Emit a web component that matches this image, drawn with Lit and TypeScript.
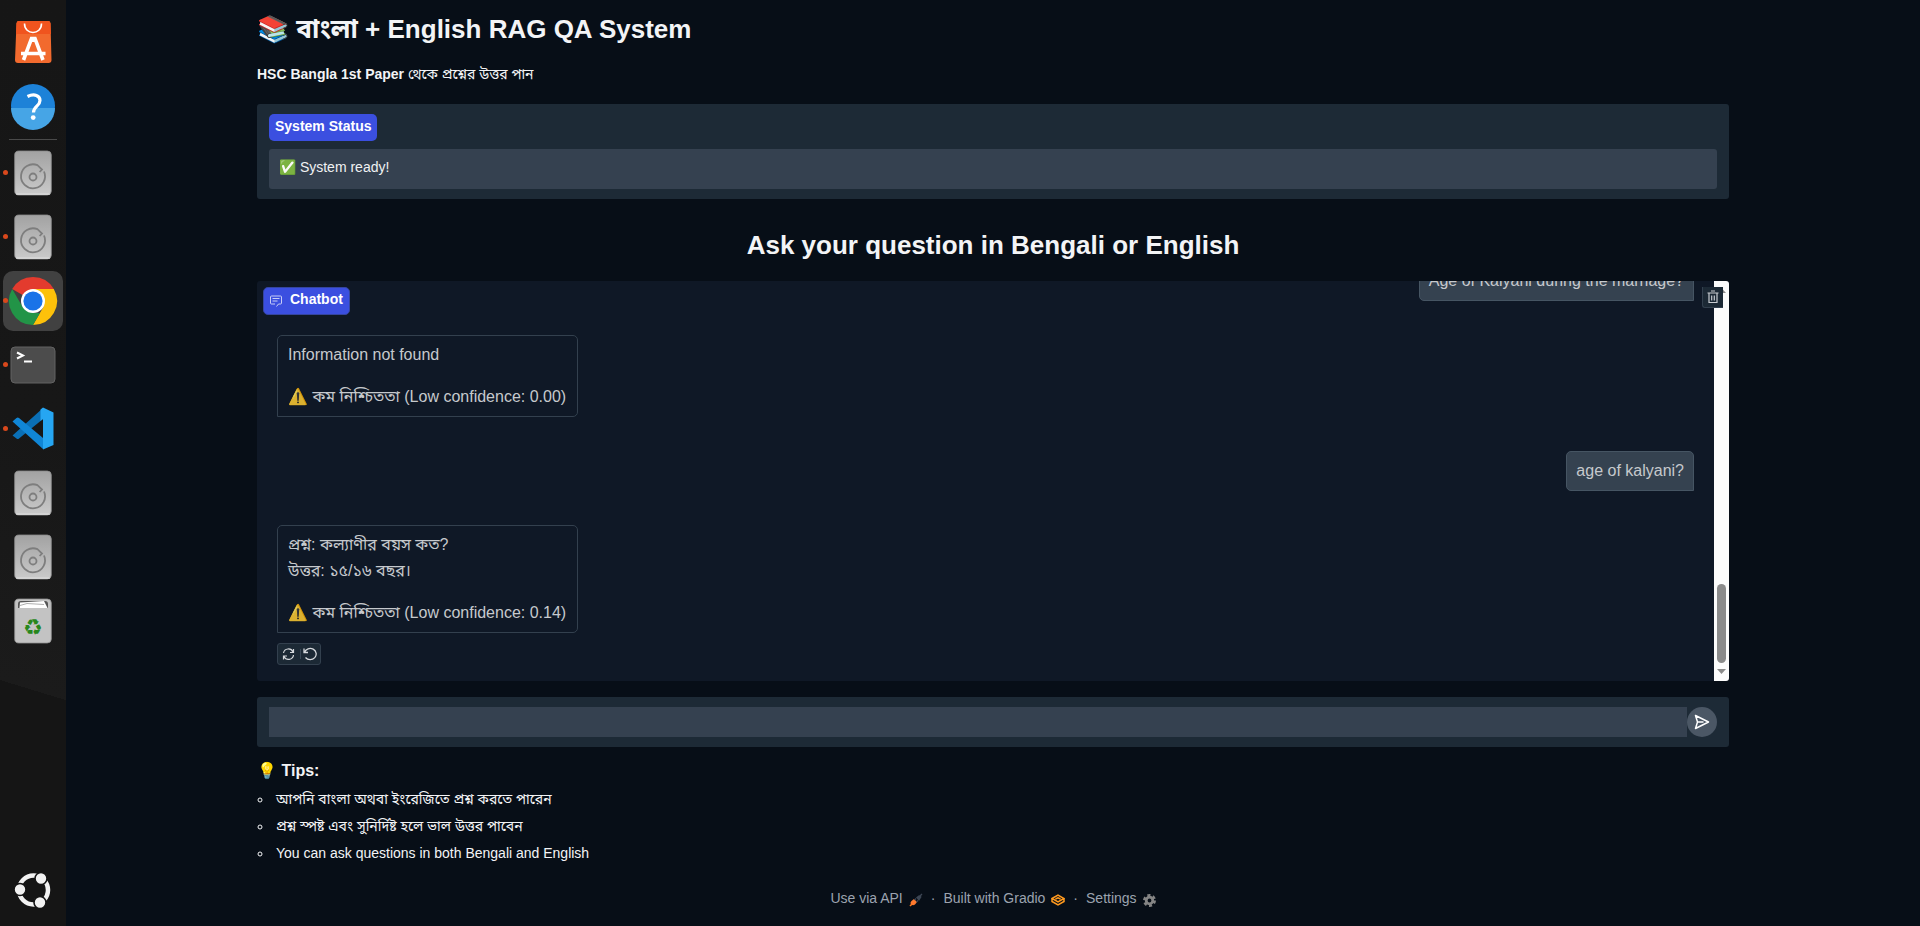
import { LitElement, html, css, svg } from "lit";
import { customElement } from "lit/decorators.js";

const driveIcon = svg`
  <rect x="11.700" y="8" width="36.600" height="44" rx="4" fill="url(#drive)" stroke="#8b8b8b" stroke-width=".8"/>
  <rect x="13" y="50.500" width="34" height="1.200" rx=".6" fill="#dedede"/>
  <path d="M41 28.500A12 12 0 1 1 34.500 22.200L39 26.500 36.600 29" fill="none" stroke="#7e7e7e" stroke-width="1.800"/>
  <circle cx="30" cy="34" r="3.500" fill="none" stroke="#7e7e7e" stroke-width="1.800"/>
  <defs><linearGradient id="drive" x1="0" y1="0" x2="0" y2="1"><stop stop-color="#a2a2a2"/><stop offset="1" stop-color="#cacaca"/></linearGradient></defs>`;

const storeIcon = svg`
  <path d="M15 9h30a2.500 2.500 0 0 1 2.500 2.300L48.500 48a3 3 0 0 1-3 3H15a3 3 0 0 1-3-3L13.500 11.300A2.500 2.500 0 0 1 16 9z" fill="#f26a2e"/>
  <path d="M16 9h29a2.500 2.500 0 0 1 2.500 2.300L48 22H13L13.500 11.300A2.500 2.500 0 0 1 16 9z" fill="#f0541e"/>
  <path d="M21.500 11.500c0 12 17 12 17 0" fill="none" stroke="#fff" stroke-width="1.600"/>
  <path d="M20.500 48 28.500 26.500h3.500L40 48M18 41.500h24.500" fill="none" stroke="#fff" stroke-width="3.600"/>
  <path d="M28 25h5v5h-5z" fill="#fff"/>`;

const helpIcon = svg`
  <circle cx="30" cy="30" r="22" fill="#1d82d8"/>
  <path d="M8 32a22 22 0 0 0 44 0z" fill="#46a5e6"/>
  <path d="M24.500 20.500c7-3.500 12.500-.8 12.500 4 0 5.500-6.500 6-6.500 12" fill="none" stroke="#fff" stroke-width="3.200"/>
  <circle cx="30.200" cy="41.600" r="2.400" fill="#fff"/>`;

const chromeIcon = svg`
  <path d="M30 30 9.200 18A24 24 0 0 1 50.800 18z" fill="#e33b2e"/>
  <path d="M30 18H50.800A24 24 0 0 1 30 54L40.400 36z" fill="#fdc10a"/>
  <path d="M9.200 18 19.600 36 30 42h7L30 54A24 24 0 0 1 9.200 18z" fill="#229447"/>
  <circle cx="30" cy="30" r="12" fill="#fff"/>
  <circle cx="30" cy="30" r="9.600" fill="#1a73e8"/>`;

const terminalIcon = svg`
  <rect x="8" y="12" width="44" height="36" rx="4" fill="#4c4c4c" stroke="#626262" stroke-width="1"/>
  <path d="M14 17.500 20 20.500 14 23.500" fill="none" stroke="#fff" stroke-width="2"/>
  <path d="M21 26.500h8" stroke="#fff" stroke-width="2"/>`;

const codeIcon = svg`
  <path d="M9.500 36.500 40 9v11L16 39.500a2 2 0 0 1-2.500 0L9.500 36.500z" fill="#0a6fb5"/>
  <path d="M9.500 22.500 13.500 19a2 2 0 0 1 2.500 0L40 39v11z" fill="#1086d6"/>
  <path d="M40 8.500 50.500 13.500v32.500L40 50.500V40L40 20z" fill="#26a6f2"/>
  <path d="M37.500 10.500 40 8.500v11.500L37.500 22z" fill="#26a6f2"/>`;

const trashCanIcon = svg`
  <rect x="11.700" y="8" width="36.600" height="44" rx="4" fill="#c3c3c3" stroke="#8f8f8f" stroke-width=".8"/>
  <path d="M15 17v-4q0-3 3-3h24q3 0 3 3v4z" fill="#555"/>
  <path d="M16.500 17 17 11.500 41 10l3.500 7z" fill="#fff"/>
  <path d="M17 14.500 24 12.500 41 13.500" fill="none" stroke="#999" stroke-width=".8"/>
  <text x="30" y="44" text-anchor="middle" font-family="DejaVu Sans" font-size="22" fill="#27871c">&#x267B;&#xFE0E;</text>`;

const ubuntuIcon = svg`
  <circle cx="30.500" cy="30" r="14.500" fill="none" stroke="#f2f2f2" stroke-width="4.500"/>
  <g fill="#f2f2f2" stroke="#151515" stroke-width="1.600">
    <circle cx="17" cy="29.500" r="6"/><circle cx="38" cy="18.500" r="6"/><circle cx="37" cy="42.500" r="6"/>
  </g>`;

const dockApps = [
  { name: "App Center", icon: storeIcon },
  { name: "Help", icon: helpIcon, last: true },
  { name: "Drive", icon: driveIcon, running: true },
  { name: "Drive", icon: driveIcon, running: true },
  { name: "Chrome", icon: chromeIcon, running: true, active: true },
  { name: "Terminal", icon: terminalIcon, running: true },
  { name: "Code", icon: codeIcon, running: true },
  { name: "Drive", icon: driveIcon },
  { name: "Drive", icon: driveIcon },
  { name: "Trash", icon: trashCanIcon },
];

@customElement("app-dock")
export class AppDock extends LitElement {
  static styles = css`
    :host { display: flex; flex-direction: column; gap: 4px; width: 66px; box-sizing: border-box; padding: 12px 3px 6px;
      background: linear-gradient(197deg, #161616, #171717 45%, #1b1b1b 74%, #151515 74%); }
    .app { position: relative; width: 60px; height: 60px; padding: 0; border: 0; border-radius: 10px; background: none; }
    .active { background: #414141; }
    .app svg { display: block; width: 60px; height: 60px; }
    .running::before { content: ""; position: absolute; left: 0; top: 27px; width: 5px; height: 5px; border-radius: 50%; background: #d9481c; }
    .line { width: 48px; height: 1px; margin: -1px auto; background: #4a4a4a; flex: none; }
    .last { margin-top: auto; }
  `;
  render() {
    return html`
      ${dockApps.map((a) => html`
        <button class="app ${a.running ? "running" : ""} ${a.active ? "active" : ""}" aria-label=${a.name}>
          <svg viewBox="0 0 60 60">${a.icon}</svg>
        </button>
        ${a.last ? html`<div class="line"></div>` : ""}`)}
      <button class="app last" aria-label="Show applications"><svg viewBox="0 0 60 60">${ubuntuIcon}</svg></button>`;
  }
}

@customElement("chat-panel")
export class ChatPanel extends LitElement {
  static styles = css`
    :host { display: flex; position: relative; height: 400px; border-radius: 3px; overflow: hidden; background: #0f1826; }
    .log { flex: 1; display: flex; flex-direction: column; justify-content: flex-end; gap: 34px; padding: 0 20px 16px; overflow: hidden; }
    .msg { box-sizing: border-box; padding: 6px 11px 6px 10px; border: 1px solid #33404e; border-radius: 5px; font-size: 16px; line-height: 26px; color: #c6c9cd; flex: none; }
    .msg p { margin: 0 0 16px; }
    .msg p:last-child { margin: 0; }
    .bot { align-self: flex-start; border-bottom-left-radius: 0; }
    .user { align-self: flex-end; padding: 6px 9px; background: #354250; border-color: #465563; border-bottom-right-radius: 0; }
    .emoji { opacity: .85; }
    .reply { display: flex; flex-direction: column; align-items: flex-start; gap: 10px; flex: none; }
    .tools { display: flex; align-items: center; box-sizing: border-box; height: 22px; padding: 0 3px; border: 1px solid #33404e; border-radius: 3px; background: #1c2935; }
    .tool { display: flex; padding: 0 2px 0 1px; border: 0; background: none; color: #d5d8dc; }
    .rule { width: 1px; height: 10px; margin: 0 2px 0 3px; background: #3a4856; }
    .tool + .rule + .tool { padding: 0; }
    .tag { position: absolute; left: 6px; top: 6px; display: flex; align-items: center; gap: 8px; box-sizing: border-box; height: 28px; padding: 0 6px 5px; border: 1px solid #35459f; border-radius: 5px; background: #3b4fe0; color: #fff; font-size: 14px; font-weight: 700; }
    .tag svg { margin-top: 4px; opacity: .8; }
    .clear { position: absolute; right: 6px; top: 6px; width: 21px; height: 21px; display: grid; place-items: center; padding: 0; border: 1px solid #33404e; border-top: 0; border-right: 0; border-bottom-left-radius: 3px; background: #1c2935; color: #c9cdd2; }
    .bar { width: 15px; display: flex; flex-direction: column; align-items: center; justify-content: space-between; background: #fcfcfc; padding: 7px 0; box-sizing: border-box; }
    .arrow { width: 9px; height: 5px; background: #8b8b8b; clip-path: polygon(0 0, 100% 0, 50% 100%); }
    .up { clip-path: polygon(0 100%, 100% 100%, 50% 0); }
    .thumb { width: 9px; height: 79px; margin: auto 0 6px; border-radius: 5px; background: #8b8b8b; }
  `;
  render() {
    return html`
      <div class="log">
        <div class="msg user">Age of Kalyani during the marriage?</div>
        <div class="msg bot"><p>Information not found</p><p><span class="emoji">⚠️</span> কম নিশ্চিততা (Low confidence: 0.00)</p></div>
        <div class="msg user">age of kalyani?</div>
        <div class="reply">
          <div class="msg bot"><p>প্রশ্ন: কল্যাণীর বয়স কত?<br />উত্তর: ১৫/১৬ বছর।</p><p><span class="emoji">⚠️</span> কম নিশ্চিততা (Low confidence: 0.14)</p></div>
          <div class="tools">
            <button class="tool" aria-label="Retry"><svg width="13" height="14" viewBox="0 0 13 14" fill="none" stroke="currentColor" stroke-width="1.200"><path d="M1.500 6A5 5 0 0 1 11 5M11.500 2v3.500H8M11.500 8A5 5 0 0 1 2 9.500M1.500 12.500V9H5"/></svg></button>
            <span class="rule"></span>
            <button class="tool" aria-label="Undo"><svg width="14" height="14" viewBox="0 0 14 14" fill="none" stroke="currentColor" stroke-width="1.300"><path d="M1 1.500v4h4M1.500 5.200A6 5.600 0 1 1 2.500 10.500"/></svg></button>
          </div>
        </div>
      </div>
      <div class="bar"><div class="arrow up"></div><div class="thumb"></div><div class="arrow"></div></div>
      <div class="tag"><svg width="12" height="12" viewBox="0 0 12 12" fill="none" stroke="currentColor" stroke-width=".9"><path d="M5 9H1.500A1 1 0 0 1 .5 8V2a1 1 0 0 1 1-1h9a1 1 0 0 1 1 1v6a1 1 0 0 1-1 1H8.500L6.500 11.500M2.500 3.500h7M2.500 6h5"/></svg>Chatbot</div>
      <button class="clear" aria-label="Clear"><svg width="12" height="14" viewBox="0 0 12 14" fill="none" stroke="currentColor" stroke-width="1.200"><path d="M.5 3h11M4 1h4M2 3v9.500h8V3M4.700 5.500v5M7.300 5.500v5"/></svg></button>`;
  }
}

@customElement("app-root")
export class AppRoot extends LitElement {
  static styles = css`
    :host { display: flex; min-height: 100vh; background: #070e17; color: #f3f4f6; font-family: "Liberation Sans", Arial, "Noto Sans Bengali", sans-serif; font-size: 14px; }
    .page { flex: 1; box-sizing: border-box; max-width: 1536px; margin: 0 auto; padding: 12px 32px 18px; display: flex; flex-direction: column; }
    h1 { margin: 0; font-size: 26px; line-height: 34px; }
    h2 { margin: 28px 0 18px; font-size: 26px; line-height: 36px; text-align: center; }
    h3 { margin: 15px 0 6px; font-size: 16px; line-height: 18px; }
    .lead { margin: 18px 0 19px; line-height: 21px; }
    .block { background: #1d2a36; border-radius: 3px; padding: 10px 12px; }
    .label { display: table; box-sizing: border-box; height: 27px; padding: 0 6px; margin-bottom: 8px; border-radius: 5px; background: #3b4fe0; color: #fff; font-weight: 700; line-height: 24px; }
    .status { display: block; box-sizing: border-box; width: 100%; height: 40px; padding: 8px 10px; border: 0; border-radius: 3px; background: #354150; color: #f0f1f3; font: inherit; line-height: 20px; resize: none; overflow: hidden; }
    .ask { display: flex; margin-top: 16px; }
    .question { flex: 1; min-width: 0; height: 30px; box-sizing: border-box; padding: 0 10px; border: 0; background: #354150; color: inherit; font: inherit; }
    .send { width: 30px; height: 30px; padding: 0; border: 0; border-radius: 50%; background: #4b5765; color: #fff; display: grid; place-items: center; }
    ul { margin: 0; padding: 0 0 0 16px; list-style: circle; }
    li { line-height: 21px; padding: 3px 0 3px 3px; }
    li::marker { font-size: 13px; }
    footer { display: flex; justify-content: center; align-items: center; gap: 8px; margin-top: auto; line-height: 20px; color: #9ca3af; }
    footer a { display: flex; align-items: center; gap: 6px; color: inherit; text-decoration: none; }
    footer svg { margin-top: 4px; }
  `;
  render() {
    return html`
      <app-dock></app-dock>
      <main class="page">
        <h1>📚 বাংলা + English RAG QA System</h1>
        <p class="lead"><strong>HSC Bangla 1st Paper</strong> থেকে প্রশ্নের উত্তর পান</p>
        <div class="block">
          <label class="label" for="status">System Status</label>
          <textarea class="status" id="status" readonly rows="1" .value=${"✅ System ready!"}></textarea>
        </div>
        <h2>Ask your question in Bengali or English</h2>
        <chat-panel></chat-panel>
        <div class="block ask">
          <input class="question" type="text" aria-label="Question" />
          <button class="send" aria-label="Send"><svg width="16" height="16" viewBox="0 0 16 16" fill="none" stroke="currentColor" stroke-width="1.500" stroke-linejoin="round"><path d="M1.500 1.500 14.500 8 1.500 14.500 3.500 8zM3.500 8h6"/></svg></button>
        </div>
        <h3>💡 Tips:</h3>
        <ul>
          <li>আপনি বাংলা অথবা ইংরেজিতে প্রশ্ন করতে পারেন</li>
          <li>প্রশ্ন স্পষ্ট এবং সুনির্দিষ্ট হলে ভাল উত্তর পাবেন</li>
          <li>You can ask questions in both Bengali and English</li>
        </ul>
        <footer>
          <a href="#api">Use via API <svg width="14" height="14" viewBox="0 0 14 14"><path d="M1 13 3 11" stroke="#ff7a1a" stroke-width="1.600"/><path d="M2.500 8 5 6 8 9 6 11.500Q4 13 2.300 11.500T2.500 8z" fill="#ff7a2e"/><path d="M7 4.500 9.500 2.500Q12 1.500 12.500 4L10 8z" fill="#3c4654"/><path d="M11 3 13 1M5.500 7 7 5.500M7.500 9 9 7.500" stroke="#3c4654" stroke-width="1.400"/></svg></a>
          <span>·</span>
          <a href="#gradio">Built with Gradio <svg width="14" height="12" viewBox="0 0 14 12" fill="none" stroke="#ff9a1f" stroke-width="1.500"><path d="M1 4.500 7 1l6 3.500L7 8zM1 4.500v3L7 11l6-3.500v-3M4.500 5 7 3.800 9.500 5" /></svg></a>
          <span>·</span>
          <a href="#settings">Settings <svg width="13" height="13" viewBox="0 0 13 13"><circle cx="6.500" cy="6.500" r="5.200" fill="none" stroke="#858585" stroke-width="2.600" stroke-dasharray="3 2.445"/><circle cx="6.500" cy="6.500" r="3.300" fill="none" stroke="#858585" stroke-width="2.800"/></svg></a>
        </footer>
      </main>`;
  }
}
